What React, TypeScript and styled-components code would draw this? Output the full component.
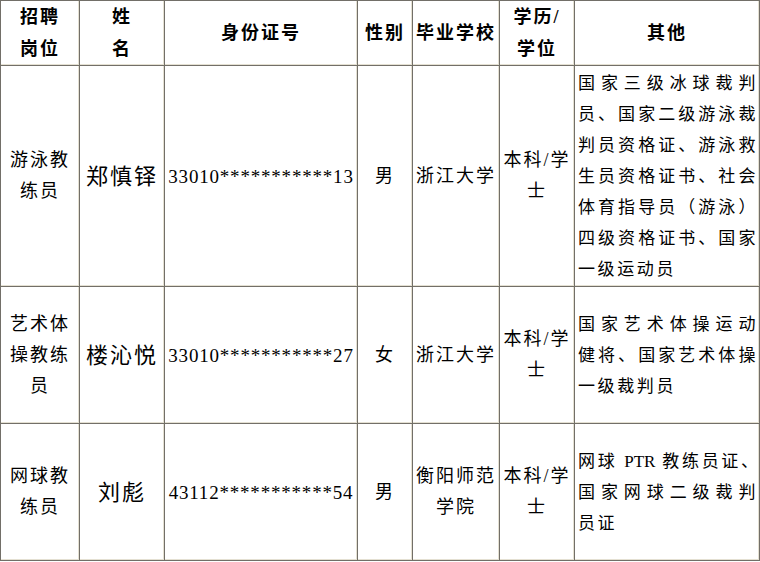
import { Fragment } from "react";
import styled, { createGlobalStyle } from "styled-components";

const GlobalStyle = createGlobalStyle`
  html, body {
    margin: 0;
    padding: 0;
    background: #ffffff;
  }
`;

const Table = styled.table`
  border-collapse: collapse;
  table-layout: fixed;
  width: 759px;
  font-family: "Liberation Serif", "Noto Sans CJK SC", serif;
  color: #000;
`;

const Col = styled.col<{ $w: number }>`
  width: ${(p) => p.$w}px;
`;

const cellBase = `
  border: 1px solid #726f68;
  box-shadow: inset -1px -1px 0 #e4e0d2;
  padding: 0;
  text-align: center;
  vertical-align: middle;
`;

const HeadCell = styled.th`
  ${cellBase}
  height: 63px;
  font-size: 18px;
  font-weight: 700;
  line-height: 32px;
  letter-spacing: 2px;
`;

const Cell = styled.td<{ $h: number }>`
  ${cellBase}
  height: ${(p) => p.$h}px;
  font-size: 18px;
  font-weight: 400;
  line-height: 31px;
  letter-spacing: 2px;
`;

const JobCell = styled(Cell)`
  padding: 0 4px;
`;

const NameCell = styled(Cell)`
  font-size: 22px;
  letter-spacing: 2px;
`;

const IdCell = styled(Cell)`
  font-size: 19px;
  letter-spacing: 0.8px;
  white-space: nowrap;
`;

const OtherCell = styled(Cell)`
  text-align: left;
  padding: 0 1px 0 3px;
  font-size: 17px;
`;

// a line of the 其他 column; every line but the last is spread to the full width
const OtherLine = styled.div<{ $spread: boolean; $tight: boolean }>`
  text-align: justify;
  text-align-last: ${(p) => (p.$spread ? "justify" : "left")};
  letter-spacing: ${(p) => (p.$tight ? 0 : 2.6)}px;
  white-space: nowrap;
`;

type Person = {
  job: string;
  name: string;
  id: string;
  sex: string;
  school: string[];
  other: string[];
  h: number;
};

const people: Person[] = [
  {
    job: "游泳教练员",
    name: "郑慎铎",
    id: "33010***********13",
    sex: "男",
    school: ["浙江大学"],
    other: [
      "国家三级冰球裁判",
      "员、国家二级游泳裁",
      "判员资格证、游泳救",
      "生员资格证书、社会",
      "体育指导员（游泳）",
      "四级资格证书、国家",
      "一级运动员",
    ],
    h: 220,
  },
  {
    job: "艺术体操教练员",
    name: "楼沁悦",
    id: "33010***********27",
    sex: "女",
    school: ["浙江大学"],
    other: ["国家艺术体操运动", "健将、国家艺术体操", "一级裁判员"],
    h: 136,
  },
  {
    job: "网球教练员",
    name: "刘彪",
    id: "43112***********54",
    sex: "男",
    school: ["衡阳师范", "学院"],
    other: ["网球 PTR 教练员证、", "国家网球二级裁判", "员证"],
    h: 136,
  },
];

function Lines({ items }: { items: string[] }) {
  return (
    <>
      {items.map((t, i) => (
        <Fragment key={i}>
          {i > 0 && <br />}
          {t}
        </Fragment>
      ))}
    </>
  );
}

export default function App() {
  return (
    <>
      <GlobalStyle />
      <Table>
        <colgroup>
          <Col $w={79} />
          <Col $w={85} />
          <Col $w={193} />
          <Col $w={55} />
          <Col $w={87} />
          <Col $w={75} />
          <Col $w={185} />
        </colgroup>
        <thead>
          <tr>
            <HeadCell>
              <Lines items={["招聘", "岗位"]} />
            </HeadCell>
            <HeadCell>
              <Lines items={["姓", "名"]} />
            </HeadCell>
            <HeadCell>身份证号</HeadCell>
            <HeadCell>性别</HeadCell>
            <HeadCell>毕业学校</HeadCell>
            <HeadCell>
              <Lines items={["学历/", "学位"]} />
            </HeadCell>
            <HeadCell>其他</HeadCell>
          </tr>
        </thead>
        <tbody>
          {people.map((p) => (
            <tr key={p.id}>
              <JobCell $h={p.h}>{p.job}</JobCell>
              <NameCell $h={p.h}>{p.name}</NameCell>
              <IdCell $h={p.h}>{p.id}</IdCell>
              <Cell $h={p.h}>{p.sex}</Cell>
              <Cell $h={p.h}>
                <Lines items={p.school} />
              </Cell>
              <Cell $h={p.h}>
                <Lines items={["本科/学", "士"]} />
              </Cell>
              <OtherCell $h={p.h}>
                {p.other.map((line, i) => (
                  <OtherLine
                    key={i}
                    $spread={i < p.other.length - 1}
                    $tight={/[A-Z]/.test(line)}
                  >
                    {line}
                  </OtherLine>
                ))}
              </OtherCell>
            </tr>
          ))}
        </tbody>
      </Table>
    </>
  );
}
